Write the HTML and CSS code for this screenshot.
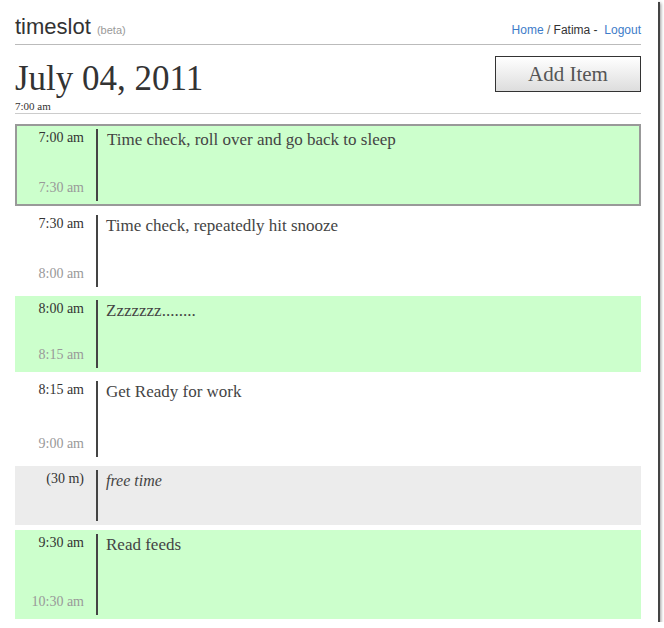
FILE: index.html
```html
<!DOCTYPE html>
<html>
<head>
  <title>timeslot</title>
  <link rel="stylesheet" href="styles.css">
</head>
<body>
  <div class="page">
    <header class="top">
      <div class="brand">timeslot <span class="beta">(beta)</span></div>
      <nav class="links">
        <a href="#">Home</a> <span class="sep">/</span> Fatima -&nbsp; <a href="#">Logout</a>
      </nav>
    </header>
    <div class="day">
      <div class="day-info">
        <h1 class="date">July 04, 2011</h1>
        <div class="now">7:00 am</div>
      </div>
      <button class="add" type="button">Add Item</button>
    </div>
    <div class="slots">
      <div class="slot busy selected" style="height: 82px">
        <div class="times"><span class="start">7:00 am</span><span class="end">7:30 am</span></div>
        <div class="what">Time check, roll over and go back to sleep</div>
      </div>
      <div class="slot" style="height: 80px">
        <div class="times"><span class="start">7:30 am</span><span class="end">8:00 am</span></div>
        <div class="what">Time check, repeatedly hit snooze</div>
      </div>
      <div class="slot busy" style="height: 76px">
        <div class="times"><span class="start">8:00 am</span><span class="end">8:15 am</span></div>
        <div class="what">Zzzzzzz........</div>
      </div>
      <div class="slot" style="height: 84px">
        <div class="times"><span class="start">8:15 am</span><span class="end">9:00 am</span></div>
        <div class="what">Get Ready for work</div>
      </div>
      <div class="slot free" style="height: 59px">
        <div class="times"><span class="start">(30 m)</span></div>
        <div class="what">free time</div>
      </div>
      <div class="slot busy" style="height: 89px">
        <div class="times"><span class="start">9:30 am</span><span class="end">10:30 am</span></div>
        <div class="what">Read feeds</div>
      </div>
    </div>
  </div>
</body>
</html>
```

FILE: styles.css
```css
body {
  margin: 0;
  padding: 0;
  background-color: #fff;
  font-family: "Liberation Serif", serif;
  color: #333;
}
.page {
  width: 658px;
  height: 622px;
  box-sizing: border-box;
  padding: 0 17px 0 15px;
  background-color: #fff;
  box-shadow: 2px 2px 0 #444, 3px 3px 3px rgba(0, 0, 0, 0.4);
  overflow: hidden;
}
.top {
  display: flex;
  justify-content: space-between;
  align-items: flex-end;
  padding: 15px 0 2px;
  border-bottom: 1px solid #bbb;
  font-family: "Liberation Sans", Arial, sans-serif;
}
.brand {
  font-size: 22px;
  line-height: 24px;
  color: #333;
}
.beta {
  font-size: 11px;
  color: #999;
}
.links {
  font-size: 12px;
  line-height: 14px;
  margin-bottom: 5px;
  color: #333;
}
.links a {
  color: #3d7cc9;
  text-decoration: none;
}
.links .sep {
  color: #666;
}
.day {
  display: flex;
  justify-content: space-between;
  align-items: flex-start;
  border-bottom: 1px solid #ccc;
}
.date {
  margin: 14px 0 0;
  font-size: 35px;
  line-height: 40px;
  font-weight: normal;
  color: #333;
}
.now {
  font-size: 11px;
  line-height: 13px;
  margin-top: 1px;
  color: #333;
}
.add {
  margin-top: 11px;
  width: 146px;
  height: 36px;
  border: 1px solid #333;
  background: linear-gradient(#fff, #ddd);
  font-family: "Liberation Serif", serif;
  font-size: 21px;
  color: #555;
  padding: 0;
  cursor: pointer;
}
.slots {
  margin-top: 10px;
}
.slot {
  display: flex;
  box-sizing: border-box;
  padding: 4px 0;
  margin-bottom: 5px;
  background-color: #fff;
}
.slot.busy {
  background-color: #ccffcc;
}
.slot.free {
  background-color: #ececec;
}
.slot.selected {
  border: 2px solid #999;
  padding: 3px 0;
}
.times {
  flex: 0 0 83px;
  box-sizing: border-box;
  display: flex;
  flex-direction: column;
  justify-content: space-between;
  align-items: flex-end;
  padding: 1px 12px 5px 0;
  border-right: 2px solid #444;
  font-size: 14px;
  line-height: 16px;
}
.selected .times {
  flex-basis: 81px;
}
.times .start {
  color: #333;
}
.times .end {
  color: #999;
}
.what {
  flex: 1;
  padding: 1px 0 0 8px;
  font-size: 17px;
  line-height: 20px;
  color: #444;
}
.selected .what {
  padding-left: 9px;
}
.free .what {
  font-style: italic;
  font-size: 16px;
}
```
